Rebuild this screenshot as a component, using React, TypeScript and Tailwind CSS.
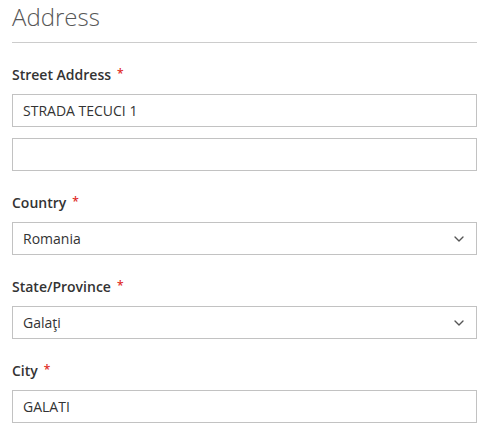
import { ChevronDown } from "lucide-react";

const Label = ({ text }: { text: string }) => (
  <label className="flex items-center h-[20px] text-[14px] font-semibold text-[#333] mb-[10px]">
    {text}
    <span className="text-[#e02b27] text-[12px] leading-none ml-[6px]">*</span>
  </label>
);

const TextInput = ({ value }: { value: string }) => (
  <input
    readOnly
    value={value}
    className="block w-full h-[33px] border border-[#c2c2c2] bg-white px-[10px] text-[14px] text-[#333] outline-none"
  />
);

const Select = ({ value }: { value: string }) => (
  <div className="relative">
    <select
      value={value}
      onChange={() => {}}
      className="block w-full h-[33px] appearance-none border border-[#c2c2c2] bg-white px-[10px] text-[14px] text-[#333] outline-none"
    >
      <option>{value}</option>
    </select>
    <ChevronDown
      className="absolute right-[10px] top-[9px] pointer-events-none text-[#555]"
      size={16}
      strokeWidth={2}
    />
  </div>
);

export default function App() {
  return (
    <div className="w-[500px] h-[435px] bg-white px-[12px] pt-px overflow-hidden" style={{ fontFamily: '"Open Sans", sans-serif' }}>
      <div className="w-[465px]">
        <h2 className="text-[24px] leading-[32px] font-light text-[#575757] pb-[9px] border-b border-[#ccc]">Address</h2>

        <div className="mt-[21px]">
          <Label text="Street Address" />
          <TextInput value="STRADA TECUCI 1" />
          <div className="mt-[11px]">
            <TextInput value="" />
          </div>
        </div>

        <div className="mt-[21px]">
          <Label text="Country" />
          <Select value="Romania" />
        </div>

        <div className="mt-[21px]">
          <Label text="State/Province" />
          <Select value="Galaţi" />
        </div>

        <div className="mt-[21px]">
          <Label text="City" />
          <TextInput value="GALATI" />
        </div>
      </div>
    </div>
  );
}
